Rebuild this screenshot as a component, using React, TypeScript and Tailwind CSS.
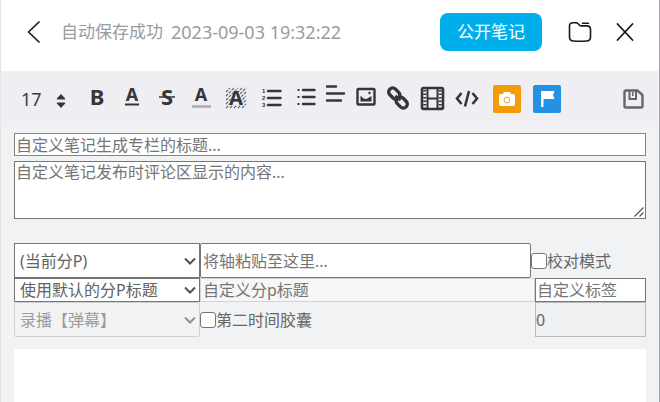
import type { ReactNode } from "react";

function ToolButton({ label, wide, children }: { label: string; wide?: boolean; children: ReactNode }) {
  return (
    <button type="button" aria-label={label} className={`flex h-7 shrink-0 justify-center ${wide ? "w-[35px]" : "w-[31px]"}`}>
      <svg
        width="29"
        height="28"
        viewBox="0 0 29 28"
        fill="none"
        stroke="#35353a"
        strokeWidth="2"
        className="shrink-0 overflow-visible font-['Noto_Sans',sans-serif] font-bold"
      >
        {children}
      </svg>
    </button>
  );
}

function Letter({ x, y, size, children }: { x: number; y: number; size: number; children: string }) {
  return (
    <text x={x} y={y} fontSize={size} textAnchor="middle" fill="#35353a" stroke="none">
      {children}
    </text>
  );
}

function SelectBox({ label, value, disabled, height }: { label: string; value: string; disabled?: boolean; height: string }) {
  const tone = disabled
    ? "rounded-xs border-[#cfd0d1] bg-[#f2f3f3] text-[#9b9b9b]"
    : "border-[#767676] bg-white text-[#626262]";
  return (
    <div className="relative w-[186px] shrink-0">
      <select
        aria-label={label}
        disabled={disabled}
        className={`block w-full appearance-none border pl-[5px] pr-5 leading-5 opacity-100 ${height} ${tone}`}
      >
        <option>{value}</option>
      </select>
      <svg
        width="12"
        height="8"
        viewBox="0 0 12 8"
        fill="none"
        stroke={disabled ? "#909090" : "#505050"}
        strokeWidth="2"
        className="pointer-events-none absolute inset-y-0 right-1 my-auto"
      >
        <path d="M1 1.5l5 5 5-5" />
      </svg>
    </div>
  );
}

function CheckBox({ label }: { label: string }) {
  return (
    <label className="flex items-center">
      <input type="checkbox" className="size-4 shrink-0 appearance-none rounded-[3px] border border-[#767676] bg-white" />
      {label}
    </label>
  );
}

export default function App() {
  return (
    <main className="flex min-h-screen flex-col border-l border-r border-l-[#e4e4e8] border-r-[#a3abaf] bg-[#f1f2f4] font-['Noto_Sans','Noto_Sans_CJK_SC',sans-serif] text-base text-[#666]">
      <header className="flex h-[71px] items-center bg-white pb-[7px] pl-[26px] pr-[25px]">
        <button type="button" aria-label="返回">
          <svg width="14" height="24" viewBox="0 0 14 24" fill="none" stroke="#18191c" strokeWidth="1.7">
            <path d="M12 2L1.5 12 12 22" strokeLinecap="round" strokeLinejoin="round" />
          </svg>
        </button>
        <p className="ml-5 flex flex-1 items-center gap-2 whitespace-nowrap text-[17px] leading-6 text-[#999b9f]">
          自动保存成功
          <time className="text-[18px]">2023-09-03 19:32:22</time>
        </p>
        <button type="button" className="h-[38px] w-[102px] rounded-lg bg-[#00aeec] text-[17px] leading-6 text-white">
          公开笔记
        </button>
        <button type="button" aria-label="文件夹" className="ml-[26px]">
          <svg width="24" height="22" viewBox="0 0 24 22" fill="none" stroke="#18191c" strokeWidth="1.6" strokeLinecap="round">
            <path d="M1.5 5Q1.5 1.800 5 1.800h3q1.300 0 2.100 1L11.300 4q.8.900 2 .9h5.500q3.700 0 3.700 3.500v7.700q0 3.900-3.900 3.900-6.600.4-13.200 0-3.900 0-3.900-3.900z" />
            <path d="M14.500 2.200h6" />
          </svg>
        </button>
        <button type="button" aria-label="关闭" className="ml-6">
          <svg width="18" height="20" viewBox="0 0 18 20" fill="none" stroke="#18191c" strokeWidth="1.8" strokeLinecap="round">
            <path d="M1.500 2l15 16M16.500 2l-15 16" />
          </svg>
        </button>
      </header>

      <div role="toolbar" className="flex h-14 items-center bg-[#eeeef3] pl-5 pr-[15px]">
        <button type="button" aria-label="字号" className="flex h-7 w-[58px] shrink-0 items-center gap-[14px] text-lg leading-6 text-[#3c3c40]">
          <span>17</span>
          <svg width="10" height="14" viewBox="0 0 10 14" fill="#35353a" className="mt-1">
            <path d="M5 0l4.200 4.400q.3 1.100-.9 1.100H1.700Q.5 5.500.8 4.400zM5 14l4.200-4.400q.3-1.100-.9-1.100H1.700q-1.200 0-.9 1.100z" />
          </svg>
        </button>
        <ToolButton label="加粗" wide>
          <Letter x={15} y={20} size={22}>B</Letter>
        </ToolButton>
        <ToolButton label="下划线" wide>
          <Letter x={15} y={16} size={18}>A</Letter>
          <path d="M8 19.500h14" />
        </ToolButton>
        <ToolButton label="删除线" wide>
          <Letter x={15} y={20} size={22}>S</Letter>
          <path d="M7 12h16" strokeWidth="1.500" />
        </ToolButton>
        <ToolButton label="字体颜色" wide>
          <Letter x={14} y={16} size={18}>A</Letter>
          <path d="M5 21.500h19" stroke="#aaaaae" strokeWidth="2.500" />
        </ToolButton>
        <ToolButton label="背景颜色" wide>
          <path
            d="M4 7l4-4M4 11l8-8M4 15L16 3M4 19L20 3M4 23L24 3M8 23L24 7M12 23l12-12M16 23l8-8M20 23l4-4"
            stroke="#66666b"
            strokeWidth="1.200"
            strokeDasharray="3 1"
          />
          <path d="M14 5L7 20h14z" fill="#eeeef3" stroke="none" />
          <Letter x={14} y={20} size={20}>A</Letter>
        </ToolButton>
        <ToolButton label="有序列表" wide>
          <g fontSize="6" fill="#35353a" stroke="none" className="font-['Liberation_Sans',sans-serif]">
            <text x="5" y="8">1</text>
            <text x="5" y="15">2</text>
            <text x="5" y="22">3</text>
          </g>
          <path d="M11 6h12.500M11 13h12.500M11 20h12.500" strokeWidth="2.400" strokeLinecap="round" />
        </ToolButton>
        <ToolButton label="无序列表">
          <path d="M13 5h11.500M13 12h11.500M13 19h11.500" strokeWidth="2.400" strokeLinecap="round" />
          <path d="M7.500 5h2M7.500 12h2M7.500 19h2" />
        </ToolButton>
        <ToolButton label="对齐方式">
          <path d="M6 1.500h9M6 8.500h17M6 15.500h14" strokeWidth="2.400" strokeLinecap="round" />
        </ToolButton>
        <ToolButton label="图片">
          <rect x="5.500" y="4" width="17" height="15.500" rx="1" strokeWidth="2.400" />
          <path d="M8.500 16.500v-6l3 3 3 .500 5-3v5.500z" fill="#35353a" stroke="none" />
          <circle cx="17.500" cy="8" r="1.200" fill="#35353a" stroke="none" />
        </ToolButton>
        <ToolButton label="链接">
          <g transform="rotate(45 15 13)" strokeWidth="3.400">
            <rect x="3" y="8.500" width="12.500" height="8" rx="4" />
            <rect x="14.500" y="9.500" width="12.500" height="8" rx="4" />
            <path d="M11.500 13h7" strokeWidth="2.500" />
          </g>
        </ToolButton>
        <ToolButton label="视频" wide>
          <rect x="6" y="3" width="21" height="21" rx="1.500" strokeWidth="2.600" />
          <path d="M11.500 3v21M21.500 3v21M11.500 13.500h10" />
          <path d="M8.800 5v18M24.200 5v18" strokeWidth="3" strokeDasharray="1.500 2" />
        </ToolButton>
        <ToolButton label="代码" wide>
          <path d="M10.500 8L6 13.500l4.500 5.500M21.500 8l4.500 5.500-4.500 5.500" strokeWidth="2.600" />
          <path d="M18 6l-4 15.500" strokeWidth="2.600" />
        </ToolButton>
        <button type="button" aria-label="截图" className="ml-[10px] size-7 shrink-0 rounded-xs bg-[#f39c07]">
          <svg width="28" height="28" viewBox="0 0 28 28" fill="white">
            <path d="M6 11q0-2 2-2h2l1-2h6l1 2h2q2 0 2 2v8q0 2-2 2H8q-2 0-2-2z" />
            <circle cx="14" cy="15" r="3" stroke="#e9a63d" strokeWidth="1" />
          </svg>
        </button>
        <button type="button" aria-label="标记" className="ml-3 size-7 shrink-0 rounded-xs bg-[#2491e3]">
          <svg width="28" height="28" viewBox="0 0 28 28" fill="white">
            <path d="M8 6h13.500l-1.500 4 1.500 4H10.500v8H8z" />
          </svg>
        </button>
        <button type="button" aria-label="保存" className="ml-auto shrink-0">
          <svg width="21" height="20" viewBox="0 0 21 20" fill="none" stroke="#65656b" strokeWidth="2.400">
            <path d="M3 1.500h11.500l5 4.500v11q0 1.500-1.500 1.500H3Q1.500 18.500 1.500 17V3Q1.500 1.500 3 1.500z" />
            <path d="M6.500 2v8h6.500V2" strokeWidth="2" />
            <path d="M9.800 3v4" strokeWidth="1.500" />
          </svg>
        </button>
      </div>

      <section className="flex flex-1 flex-col px-[13px] pt-1.5">
        <input
          aria-label="专栏标题"
          placeholder="自定义笔记生成专栏的标题..."
          className="h-[23px] w-full border border-[#858585] bg-white px-px leading-5 placeholder:text-[#757575]"
        />
        <div className="relative mt-[5px]">
          <textarea
            aria-label="评论内容"
            placeholder="自定义笔记发布时评论区显示的内容..."
            className="block h-[58px] w-full resize-none border border-[#767676] bg-white px-px leading-5 placeholder:text-[#757575]"
          />
          <svg
            width="10"
            height="10"
            viewBox="0 0 10 10"
            stroke="#555"
            strokeWidth="1.200"
            className="pointer-events-none absolute bottom-0.5 right-0.5"
          >
            <path d="M.5 9.500l9-9M5.500 9.500l4-4" />
          </svg>
        </div>

        <div className="mt-6 flex">
          <SelectBox label="分P" value="(当前分P)" height="h-[35px]" />
          <input
            aria-label="时间轴"
            placeholder="将轴粘贴至这里..."
            className="min-w-0 flex-1 rounded-xs border border-[#767676] bg-white px-0.5 leading-5 placeholder:text-[#757575]"
          />
          <div className="flex w-[115px] shrink-0">
            <CheckBox label="校对模式" />
          </div>
        </div>
        <div className="flex">
          <SelectBox label="分P标题" value="使用默认的分P标题" height="h-6" />
          <input
            aria-label="自定义分p标题"
            placeholder="自定义分p标题"
            disabled
            className="min-w-0 flex-1 border border-[#d3d4d5] bg-[#f6f6f6] px-0.5 leading-5 placeholder:text-[#757575]"
          />
          <input
            aria-label="自定义标签"
            placeholder="自定义标签"
            className="w-[111px] shrink-0 border border-[#767676] bg-white px-px leading-5 placeholder:text-[#757575]"
          />
        </div>
        <div className="flex">
          <SelectBox label="类型" value="录播【弹幕】" disabled height="h-[35px]" />
          <div className="flex min-w-0 flex-1">
            <CheckBox label="第二时间胶囊" />
          </div>
          <input
            aria-label="时间偏移"
            defaultValue="0"
            className="w-[111px] shrink-0 border border-[#b9babc] bg-[#eff0f2] leading-5 text-[#666]"
          />
        </div>
        <div role="textbox" aria-label="笔记正文" contentEditable className="mt-3 min-h-[53px] flex-1 bg-white outline-none" />
      </section>
    </main>
  );
}
